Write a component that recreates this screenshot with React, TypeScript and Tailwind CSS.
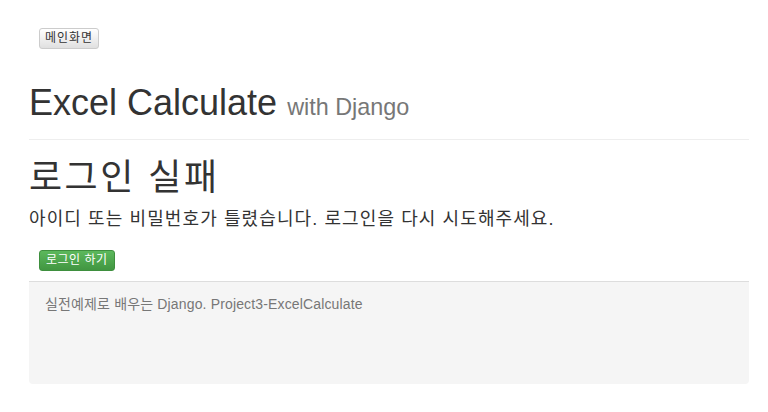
export default function App() {
  const font = { fontFamily: '"Liberation Sans", Arial, "Noto Sans CJK KR", sans-serif' };
  return (
    <div className="min-h-[412px] bg-white text-[#333]" style={font}>
      <div className="ml-[29px] w-[720px]">
        <div className="pl-[10px] pt-[25px]">
          <button
            type="button"
            className="h-[21px] rounded-[3px] border border-[#ccc] bg-gradient-to-b from-white to-[#e0e0e0] px-[5px] text-[12px] leading-[19px] tracking-[1px] text-[#333] shadow-[0_1px_0_rgba(255,255,255,0.15)]"
          >
            메인화면
          </button>
        </div>

        <h1 className="mt-[34px] text-[36px] leading-[40px] font-normal">
          Excel Calculate <span className="text-[23.4px] text-[#777]">with Django</span>
        </h1>

        <hr className="mt-[12px] border-t border-[#eee]" />

        <h1 className="mt-[16px] text-[36px] leading-[44px] font-normal tracking-[2.5px]">로그인 실패</h1>
        <p className="mt-[6px] text-[18px] leading-[26px] tracking-[1.1px]">
          아이디 또는 비밀번호가 틀렸습니다. 로그인을 다시 시도해주세요.
        </p>

        <div className="pl-[10px] pt-[15px]">
          <button
            type="button"
            className="h-[21px] rounded-[3px] border border-[#3e8f3e] bg-gradient-to-b from-[#5cb85c] to-[#419641] px-[6px] text-[12px] leading-[19px] tracking-[0.5px] text-white"
          >
            로그인 하기
          </button>
        </div>

        <footer className="mt-[10px] h-[103px] rounded-b-[4px] border-t border-[#ddd] bg-[#f5f5f5] px-[16px] pt-[12px] text-[14px] leading-[20px] tracking-[0.15px] text-[#777]">
          실전예제로 배우는 Django. Project3-ExcelCalculate
        </footer>
      </div>
    </div>
  );
}
